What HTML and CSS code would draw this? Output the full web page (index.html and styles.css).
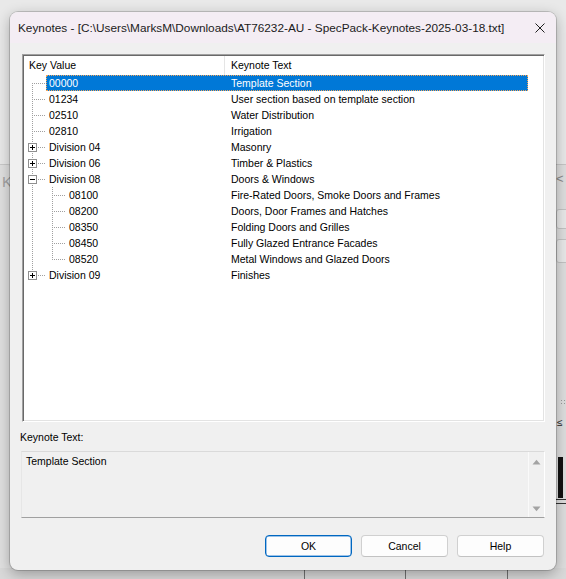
FILE: index.html
```html
<!DOCTYPE html>
<html lang="en">
<head>
<meta charset="utf-8">
<title>Keynotes</title>
<link rel="stylesheet" href="styles.css">
</head>
<body>
<div class="desktop">
  <div class="bg-left"><span class="bg-k">K</span></div>
  <div class="bg-right">
    <span class="bg-chev">&lt;</span>
    <div class="bg-field f1"></div>
    <div class="bg-field f2"></div>
    <div class="bg-dots"></div>
    <span class="bg-le">&le;</span>
    <div class="bg-bar"></div>
    <div class="bg-eq"></div>
  </div>
  <div class="bg-bottom">
    <span class="bg-vl v1"></span><span class="bg-vl v2"></span><span class="bg-vl v3"></span>
  </div>

  <div class="dialog">
    <div class="titlebar">
      <span class="title">Keynotes - [C:\Users\MarksM\Downloads\AT76232-AU - SpecPack-Keynotes-2025-03-18.txt]</span>
      <svg class="close" width="10" height="10" viewBox="0 0 10 10"><path d="M0.5 0.5L9.5 9.5M9.5 0.5L0.5 9.5" stroke="#1f1f1f" stroke-width="1"/></svg>
    </div>
    <div class="client">
      <div class="tree">
        <div class="tree-header">
          <div class="hcell hc1">Key Value</div>
          <div class="hcell hc2">Keynote Text</div>
        </div>
        <div class="rows">
          <div class="row">
            <span class="c c-first"></span>
            <span class="lbl l0 sel"><span class="k k0">00000</span><span class="t">Template Section</span></span>
          </div>
          <div class="row">
            <span class="c c-mid"></span>
            <span class="lbl l0"><span class="k k0">01234</span><span class="t">User section based on template section</span></span>
          </div>
          <div class="row">
            <span class="c c-mid"></span>
            <span class="lbl l0"><span class="k k0">02510</span><span class="t">Water Distribution</span></span>
          </div>
          <div class="row">
            <span class="c c-mid"></span>
            <span class="lbl l0"><span class="k k0">02810</span><span class="t">Irrigation</span></span>
          </div>
          <div class="row">
            <span class="c c-mid"><svg class="exp" width="9" height="9" viewBox="0 0 9 9"><rect x="0.5" y="0.5" width="8" height="8" fill="#fff" stroke="#8f8f8f"/><path d="M2 4.5h5M4.5 2v5" stroke="#000"/></svg></span>
            <span class="lbl l0"><span class="k k0">Division 04</span><span class="t">Masonry</span></span>
          </div>
          <div class="row">
            <span class="c c-mid"><svg class="exp" width="9" height="9" viewBox="0 0 9 9"><rect x="0.5" y="0.5" width="8" height="8" fill="#fff" stroke="#8f8f8f"/><path d="M2 4.5h5M4.5 2v5" stroke="#000"/></svg></span>
            <span class="lbl l0"><span class="k k0">Division 06</span><span class="t">Timber &amp; Plastics</span></span>
          </div>
          <div class="row">
            <span class="c c-mid"><svg class="exp" width="9" height="9" viewBox="0 0 9 9"><rect x="0.5" y="0.5" width="8" height="8" fill="#fff" stroke="#8f8f8f"/><path d="M2 4.5h5" stroke="#000"/></svg></span>
            <span class="lbl l0"><span class="k k0">Division 08</span><span class="t">Doors &amp; Windows</span></span>
          </div>
          <div class="row">
            <span class="g"></span><span class="c c-mid"></span>
            <span class="lbl l1"><span class="k k1">08100</span><span class="t">Fire-Rated Doors, Smoke Doors and Frames</span></span>
          </div>
          <div class="row">
            <span class="g"></span><span class="c c-mid"></span>
            <span class="lbl l1"><span class="k k1">08200</span><span class="t">Doors, Door Frames and Hatches</span></span>
          </div>
          <div class="row">
            <span class="g"></span><span class="c c-mid"></span>
            <span class="lbl l1"><span class="k k1">08350</span><span class="t">Folding Doors and Grilles</span></span>
          </div>
          <div class="row">
            <span class="g"></span><span class="c c-mid"></span>
            <span class="lbl l1"><span class="k k1">08450</span><span class="t">Fully Glazed Entrance Facades</span></span>
          </div>
          <div class="row">
            <span class="g"></span><span class="c c-last"></span>
            <span class="lbl l1"><span class="k k1">08520</span><span class="t">Metal Windows and Glazed Doors</span></span>
          </div>
          <div class="row">
            <span class="c c-last"><svg class="exp" width="9" height="9" viewBox="0 0 9 9"><rect x="0.5" y="0.5" width="8" height="8" fill="#fff" stroke="#8f8f8f"/><path d="M2 4.5h5M4.5 2v5" stroke="#000"/></svg></span>
            <span class="lbl l0"><span class="k k0">Division 09</span><span class="t">Finishes</span></span>
          </div>
        </div>
      </div>

      <div class="field-label">Keynote Text:</div>
      <div class="textbox">
        <div class="tb-text">Template Section</div>
        <div class="tb-scroll">
          <svg width="9" height="6" viewBox="0 0 9 6"><polygon points="0.5,5.5 4.5,0.8 8.5,5.5" fill="#a3a3a3"/></svg>
          <svg width="9" height="6" viewBox="0 0 9 6"><polygon points="0.5,0.5 4.5,5.2 8.5,0.5" fill="#a3a3a3"/></svg>
        </div>
      </div>

      <div class="buttons">
        <button class="btn default">OK</button>
        <button class="btn">Cancel</button>
        <button class="btn">Help</button>
      </div>
    </div>
  </div>
</div>
</body>
</html>
```

FILE: styles.css
```css
* { box-sizing: border-box; }
html, body { margin: 0; padding: 0; }
body {
  width: 566px;
  height: 579px;
  overflow: hidden;
  background: #e9e9e9;
  font-family: "Liberation Sans", Arial, sans-serif;
}
.desktop {
  position: relative;
  width: 566px;
  height: 579px;
  background: #e9e9e9;
}

/* background application (behind the dialog) */
.bg-left {
  position: absolute;
  left: 0;
  top: 164px;
  width: 14px;
  height: 415px;
  background: #e0e0e0;
  border-top: 1px solid #c9c9c9;
  border-top-right-radius: 6px;
}
.bg-k {
  position: absolute;
  left: 2px;
  top: 8px;
  font-size: 15px;
  color: #a3a3a3;
}
.bg-right {
  position: absolute;
  left: 552px;
  top: 164px;
  width: 14px;
  height: 415px;
  background: #dedede;
  border-top: 1px solid #c6c6c6;
}
.bg-chev {
  position: absolute;
  left: 4px;
  top: 6px;
  font-size: 13px;
  color: #8a8a8a;
}
.bg-field {
  position: absolute;
  left: 4px;
  width: 14px;
  background: #e9e9e9;
  border: 1px solid #c3c3c3;
  border-radius: 3px;
}
.f1 { top: 44px; height: 20px; }
.f2 { top: 74px; height: 24px; }
.bg-dots {
  position: absolute;
  left: 8px;
  top: 234px;
  width: 6px;
  height: 5px;
  background: radial-gradient(circle, #9a9a9a 0.8px, transparent 1px) 0 0 / 3px 3px;
}
.bg-le {
  position: absolute;
  left: 5px;
  top: 252px;
  font-size: 10px;
  color: #222;
}
.bg-bar {
  position: absolute;
  left: 6px;
  top: 292px;
  width: 5px;
  height: 41px;
  background: #111;
}
.bg-eq {
  position: absolute;
  left: 4px;
  top: 334px;
  width: 10px;
  height: 5px;
  border-top: 1px solid #333;
  border-bottom: 1px solid #333;
}
.bg-bottom {
  position: absolute;
  left: 0;
  top: 568px;
  width: 566px;
  height: 11px;
  background: #d9d9d9;
}
.bg-vl {
  position: absolute;
  top: 0;
  width: 1px;
  height: 11px;
  background: #707070;
}
.v1 { left: 304px; }
.v2 { left: 405px; }
.v3 { left: 507px; }

/* dialog window */
.dialog {
  position: absolute;
  left: 10px;
  top: 12px;
  width: 546px;
  height: 558px;
  background: #f0f0f0;
  border-radius: 8px;
  overflow: hidden;
  box-shadow: 0 0 0 1px rgba(0, 0, 0, 0.16), 0 4px 14px rgba(0, 0, 0, 0.30);
  display: flex;
  flex-direction: column;
}
.titlebar {
  flex: none;
  height: 31px;
  background: #f4edf4;
  display: flex;
  align-items: center;
  padding-left: 8px;
  font-size: 11.8px;
  color: #1b1b1b;
}
.title { flex: 1; white-space: nowrap; }
.close { flex: none; margin-right: 11px; display: block; }

.client {
  flex: 1;
  display: flex;
  flex-direction: column;
  padding: 11px 12px 0 12px;
  font-size: 10.5px;
  color: #000;
}

/* tree list */
.tree {
  width: 523px;
  height: 368px;
  flex: none;
  background: #fff;
  border: 1px solid;
  border-color: #a0a0a0 #ffffff #ffffff #a0a0a0;
  box-shadow: inset 1px 1px 0 #696969, inset -1px -1px 0 #e3e3e3;
  padding: 1px 0 0 1px;
}
.tree-header {
  height: 19px;
  display: flex;
  line-height: 19px;
  white-space: nowrap;
}
.hcell { height: 19px; }
.hc1 { width: 201px; padding-left: 5px; border-right: 1px solid #e5e5e5; }
.hc2 { width: 304px; padding-left: 6px; }

.rows { display: flex; flex-direction: column; }
.row {
  height: 16px;
  display: flex;
  align-items: stretch;
  white-space: nowrap;
}
.g, .c {
  flex: none;
  height: 16px;
  background-repeat: no-repeat;
}
.g {
  width: 20px;
  background-image: repeating-linear-gradient(to bottom, #a0a0a0 0 1px, transparent 1px 2px);
  background-size: 1px 16px;
  background-position: 8px 0;
}
.c {
  width: 22px;
  padding: 4px 0 0 4px;
  background-image:
    repeating-linear-gradient(to bottom, #a0a0a0 0 1px, transparent 1px 2px),
    repeating-linear-gradient(to right, #a0a0a0 0 1px, transparent 1px 2px);
}
.c-mid {
  background-size: 1px 16px, 12px 1px;
  background-position: 8px 0, 10px 8px;
}
.c-first {
  background-size: 1px 8px, 12px 1px;
  background-position: 8px 8px, 10px 8px;
}
.c-last {
  background-size: 1px 9px, 12px 1px;
  background-position: 8px 0, 10px 8px;
}
.exp { display: block; shape-rendering: crispEdges; }

.lbl {
  flex: none;
  display: flex;
  height: 16px;
  line-height: 16px;
}
.l0 { width: 482px; }
.l1 { width: 462px; }
.k { flex: none; padding-left: 3px; overflow: hidden; }
.k0 { width: 182px; }
.k1 { width: 162px; }
.t { flex: 1; padding-left: 3px; overflow: hidden; }
.sel {
  background: #0078d7;
  color: #fff;
  outline: 1px dotted #f4a55a;
  outline-offset: -1px;
}

/* keynote text box */
.field-label {
  margin: 7px 0 0 -2px;
  height: 16px;
  line-height: 16px;
}
.textbox {
  margin: 6px 0 0 -1px;
  width: 524px;
  height: 67px;
  flex: none;
  display: flex;
  border: 1px solid;
  border-color: #dadada #ffffff #a0a0a0 #e6e6e6;
  background: #f0f0f0;
}
.tb-text {
  flex: 1;
  padding: 1px 0 0 4px;
  line-height: 16px;
}
.tb-scroll {
  flex: none;
  width: 16px;
  border-left: 1px solid #fafafa;
  display: flex;
  flex-direction: column;
  justify-content: space-between;
  align-items: center;
  padding: 7px 0 5px 0;
}
.tb-scroll svg { display: block; }

/* buttons */
.buttons {
  display: flex;
  justify-content: flex-end;
  gap: 9px;
  margin-top: 17px;
}
.btn {
  width: 87px;
  height: 22px;
  padding: 0;
  font-family: "Liberation Sans", Arial, sans-serif;
  font-size: 10.5px;
  color: #000;
  background: #fdfdfd;
  border: 1px solid #d0d0d0;
  border-bottom-color: #c2c2c2;
  border-radius: 4px;
}
.btn.default {
  border: 1px solid #0067c0;
  box-shadow: inset 0 0 0 0.5px #3d8ad6;
}
```
